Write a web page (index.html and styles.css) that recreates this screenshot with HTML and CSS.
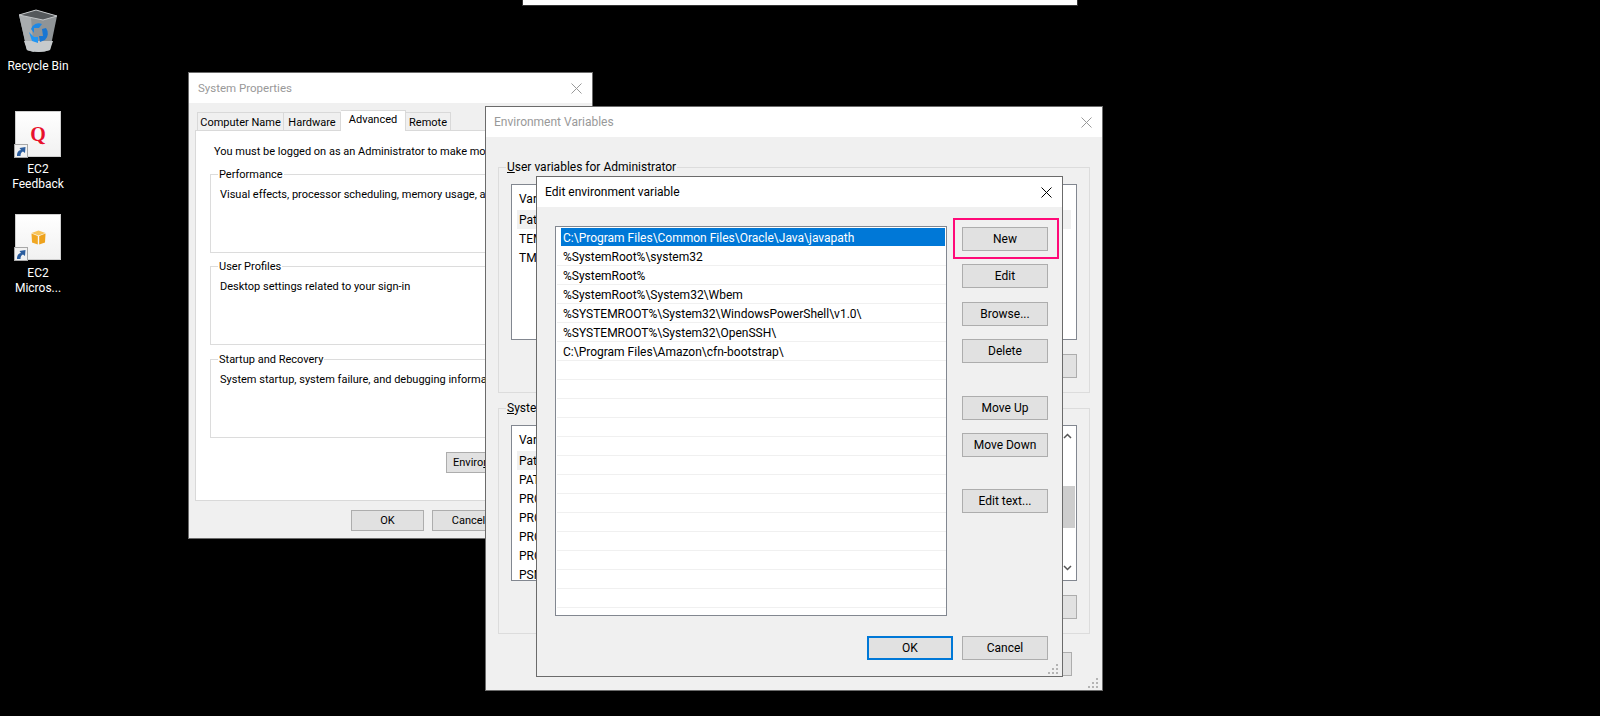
FILE: index.html
```html
<!DOCTYPE html>
<html lang="en">
<head>
    <meta charset="UTF-8">
    <title>Edit environment variable</title>
    <link rel="stylesheet" href="styles.css">
</head>
<body>

    <div class="top-strip"></div>

    <!-- desktop icons -->
    <div class="desk-icon recycle">
        <svg class="bin" width="42" height="44" viewBox="0 0 42 44">
            <path d="M2 6 L19 1 L40 7 L33 41 Q22 45 10 41 Z" fill="#8f9497"/>
            <path d="M2 6 L10 41 Q14 42.5 17 43 L14 9 Z" fill="#a9adaf"/>
            <path d="M2 6 L19 1 L40 7 L26 11 Z" fill="#55595c"/>
            <path d="M2 6 L19 1 L40 7 L26 11 Z" fill="none" stroke="#c4c7c9" stroke-width="1"/>
            <path d="M7 32 L36 32 L33 41 Q22 45 10 41 Z" fill="#c6cacc"/>
            <path d="M14 20 A8 8 0 0 1 25 15 L22 19 L17 19 L17 24 Z" fill="#1e88e5"/>
            <path d="M29 19 A9 9 0 0 1 28 31 L23 33 L22 27 L26 27 L25 20 Z" fill="#1976d2"/>
            <path d="M12 23 L17 28 L21 28 L21 34 L15 32 Z" fill="#2196f3"/>
        </svg>
        <span class="desk-label">Recycle Bin</span>
    </div>

    <div class="desk-icon feedback">
        <div class="tile">
            <span class="q-logo">Q</span>
            <svg class="shortcut" width="14" height="14" viewBox="0 0 14 14">
                <rect x="0.5" y="0.5" width="13" height="13" fill="#f2f2f2" stroke="#a8a8a8"/>
                <path d="M3 12 C3 8 4.500 6.500 7 6 L5.500 4 L11.500 3 L11 9 L9 7.500 C7.500 8 6.500 9.500 6.500 12 Z" fill="#2b5d9e"/>
            </svg>
        </div>
        <span class="desk-label">EC2<br>Feedback</span>
    </div>

    <div class="desk-icon micros">
        <div class="tile">
            <svg class="cube" width="15" height="15" viewBox="0 0 15 15">
                <path d="M0.500 3 L7.500 0.500 L14.500 3 L7.500 5.500 Z" fill="#f8c45a"/>
                <path d="M0.500 3.500 L6.800 6 L6.800 14.500 L1 12.500 Z" fill="#f0a723"/>
                <path d="M14.500 3.500 L8.200 6 L8.200 14.500 L14 12.500 Z" fill="#eea21c"/>
            </svg>
            <svg class="shortcut" width="14" height="14" viewBox="0 0 14 14">
                <rect x="0.5" y="0.5" width="13" height="13" fill="#f2f2f2" stroke="#a8a8a8"/>
                <path d="M3 12 C3 8 4.500 6.500 7 6 L5.500 4 L11.500 3 L11 9 L9 7.500 C7.500 8 6.500 9.500 6.500 12 Z" fill="#2b5d9e"/>
            </svg>
        </div>
        <span class="desk-label">EC2<br>Micros...</span>
    </div>

    <!-- System Properties -->
    <div class="window sysprops">
        <div class="titlebar inactive">
            <span>System Properties</span>
            <svg class="close" width="11" height="11" viewBox="0 0 11 11"><path d="M0.500 0.500 L10.500 10.500 M10.500 0.500 L0.500 10.500" stroke="#999" fill="none"/></svg>
        </div>
        <div class="sys-body">
            <div class="tabs">
                <span class="tab tab-name">Computer Name</span>
                <span class="tab tab-hw">Hardware</span>
                <span class="tab tab-adv">Advanced</span>
                <span class="tab tab-rem">Remote</span>
            </div>
            <div class="page">
                <p class="notice">You must be logged on as an Administrator to make most of these changes.</p>
                <fieldset class="group first">
                    <legend>Performance</legend>
                    <p>Visual effects, processor scheduling, memory usage, and virtual memory</p>
                </fieldset>
                <fieldset class="group second">
                    <legend>User Profiles</legend>
                    <p>Desktop settings related to your sign-in</p>
                </fieldset>
                <fieldset class="group third">
                    <legend>Startup and Recovery</legend>
                    <p>System startup, system failure, and debugging information</p>
                </fieldset>
                <div class="env-row"><button class="btn env-btn">Enviro<u>n</u>ment Variables...</button></div>
            </div>
            <div class="sys-footer">
                <button class="btn small">OK</button>
                <button class="btn small">Cancel</button>
                <button class="btn small">Apply</button>
            </div>
        </div>
    </div>

    <!-- Environment Variables -->
    <div class="window envvars">
        <div class="titlebar inactive">
            <span>Environment Variables</span>
            <svg class="close" width="11" height="11" viewBox="0 0 11 11"><path d="M0.500 0.500 L10.500 10.500 M10.500 0.500 L0.500 10.500" stroke="#999" fill="none"/></svg>
        </div>
        <div class="env-body">
            <fieldset class="env-group">
                <legend><u>U</u>ser variables for Administrator</legend>
                <div class="var-list user-list">
                    <div class="var-rows">
                        <div class="var-head">Variable</div>
                        <div class="var-row picked">Path</div>
                        <div class="var-row">TEMP</div>
                        <div class="var-row">TMP</div>
                    </div>
                </div>
                <div class="var-actions"><button class="btn wide">Delete</button></div>
            </fieldset>
            <fieldset class="env-group sys-group">
                <legend><u>S</u>ystem variables</legend>
                <div class="var-list system-list">
                    <div class="var-rows">
                        <div class="var-head">Variable</div>
                        <div class="var-row picked">Path</div>
                        <div class="var-row">PATHEXT</div>
                        <div class="var-row">PROCESSOR_ARCHITECTURE</div>
                        <div class="var-row">PROCESSOR_IDENTIFIER</div>
                        <div class="var-row">PROCESSOR_LEVEL</div>
                        <div class="var-row">PROCESSOR_REVISION</div>
                        <div class="var-row">PSModulePath</div>
                    </div>
                    <div class="scrollbar">
                        <svg width="9" height="6" viewBox="0 0 9 6"><path d="M1 5 L4.500 1.500 L8 5" fill="none" stroke="#555" stroke-width="1.500"/></svg>
                        <div class="thumb"></div>
                        <svg width="9" height="6" viewBox="0 0 9 6"><path d="M1 1 L4.500 4.500 L8 1" fill="none" stroke="#555" stroke-width="1.500"/></svg>
                    </div>
                </div>
                <div class="var-actions"><button class="btn wide">Delete</button></div>
            </fieldset>
            <div class="env-footer"><button class="btn wide">Cancel</button></div>
        </div>
        <svg class="grip" width="12" height="12" viewBox="0 0 12 12"><path d="M8 0h2v2H8zM4 4h2v2H4zM8 4h2v2H8zM0 8h2v2H0zM4 8h2v2H4zM8 8h2v2H8z" fill="#b4b4b4"/></svg>
    </div>

    <!-- Edit environment variable -->
    <div class="window editvar">
        <div class="titlebar">
            <span>Edit environment variable</span>
            <svg class="close" width="11" height="11" viewBox="0 0 11 11"><path d="M0.500 0.500 L10.500 10.500 M10.500 0.500 L0.500 10.500" stroke="#000" fill="none"/></svg>
        </div>
        <div class="edit-body">
            <div class="edit-main">
                <div class="path-list">
                    <div class="path-row selected">C:\Program Files\Common Files\Oracle\Java\javapath</div>
                    <div class="path-row">%SystemRoot%\system32</div>
                    <div class="path-row">%SystemRoot%</div>
                    <div class="path-row">%SystemRoot%\System32\Wbem</div>
                    <div class="path-row">%SYSTEMROOT%\System32\WindowsPowerShell\v1.0\</div>
                    <div class="path-row">%SYSTEMROOT%\System32\OpenSSH\</div>
                    <div class="path-row">C:\Program Files\Amazon\cfn-bootstrap\</div>
                    <div class="path-row"></div>
                    <div class="path-row"></div>
                    <div class="path-row"></div>
                    <div class="path-row"></div>
                    <div class="path-row"></div>
                    <div class="path-row"></div>
                    <div class="path-row"></div>
                    <div class="path-row"></div>
                    <div class="path-row"></div>
                    <div class="path-row"></div>
                    <div class="path-row"></div>
                    <div class="path-row"></div>
                    <div class="path-row"></div>
                </div>
                <div class="side-buttons">
                    <button class="btn wide highlighted">New</button>
                    <button class="btn wide">Edit</button>
                    <button class="btn wide browse">Browse...</button>
                    <button class="btn wide">Delete</button>
                    <button class="btn wide move-up">Move Up</button>
                    <button class="btn wide">Move Down</button>
                    <button class="btn wide edit-text">Edit text...</button>
                </div>
            </div>
            <div class="edit-footer">
                <button class="btn wide default">OK</button>
                <button class="btn wide">Cancel</button>
            </div>
        </div>
        <svg class="grip" width="12" height="12" viewBox="0 0 12 12"><path d="M8 0h2v2H8zM4 4h2v2H4zM8 4h2v2H8zM0 8h2v2H0zM4 8h2v2H4zM8 8h2v2H8z" fill="#b4b4b4"/></svg>
    </div>

    <!-- red box drawn on the screenshot -->
    <div class="callout"></div>

</body>
</html>
```

FILE: styles.css
```css
* {
    box-sizing: border-box;
}
body {
    margin: 0;
    width: 1600px;
    height: 716px;
    overflow: hidden;
    background: #000;
    font-family: Roboto, "Open Sans", sans-serif;
    font-size: 12px;
    line-height: 16px;
    color: #000;
    position: relative;
}
p {
    margin: 0;
    white-space: nowrap;
}

.top-strip {
    position: absolute;
    left: 522px;
    top: -1px;
    width: 556px;
    height: 7px;
    background: #fff;
    border: 1px solid #333;
}

/* desktop */
.desk-icon {
    position: absolute;
    left: 0;
    width: 76px;
    display: flex;
    flex-direction: column;
    align-items: center;
}
.recycle {
    top: 9px;
}
.feedback {
    top: 111px;
}
.micros {
    top: 214px;
}
.bin {
    margin-bottom: 6px;
}
.desk-label {
    color: #fff;
    text-align: center;
    line-height: 15px;
    text-shadow: 0 1px 2px #000;
}
.tile {
    position: relative;
    width: 46px;
    height: 46px;
    margin-bottom: 5px;
    background: linear-gradient(#fff, #f1f1f1);
    border: 1px solid #cfcfcf;
    display: flex;
    align-items: center;
    justify-content: center;
}
.micros .tile {
    margin-bottom: 6px;
}
.q-logo {
    font-family: "Liberation Serif", serif;
    font-size: 20px;
    font-weight: bold;
    color: #e8112d;
    line-height: 20px;
}
.shortcut {
    position: absolute;
    left: -2px;
    bottom: -2px;
}

/* windows */
.window {
    position: absolute;
    border: 1px solid #6b6b6b;
    background: #f0f0f0;
    display: flex;
    flex-direction: column;
}
.sysprops {
    left: 188px;
    top: 72px;
    width: 405px;
    height: 467px;
    font-size: 11px;
}
.envvars {
    left: 485px;
    top: 106px;
    width: 618px;
    height: 585px;
}
.editvar {
    left: 536px;
    top: 176px;
    width: 527px;
    height: 501px;
}
.titlebar {
    flex: none;
    height: 30px;
    background: #fff;
    padding: 0 9px 0 8px;
    display: flex;
    align-items: center;
    justify-content: space-between;
}
.titlebar .close {
    margin-right: 1px;
}
.titlebar.inactive {
    color: #999;
}
.sysprops .titlebar {
    padding-left: 9px;
    font-size: 11.5px;
}
.grip {
    position: absolute;
    right: 2px;
    bottom: 0;
}

.btn {
    display: block;
    margin: 0;
    padding: 0;
    font: inherit;
    color: #000;
    background: #e1e1e1;
    border: 1px solid #adadad;
    white-space: nowrap;
    text-align: center;
}
.btn.small {
    width: 73px;
    height: 21px;
}
.btn.wide {
    width: 86px;
    height: 24px;
}
.btn.default {
    border: 2px solid #0078d7;
}

/* system properties */
.sys-body {
    flex: 1;
    padding: 7px 5px 0 6px;
}
.tabs {
    display: flex;
    height: 20px;
    padding-left: 2px;
    align-items: flex-end;
    position: relative;
    z-index: 1;
}
.tab {
    height: 18px;
    margin-bottom: 0;
    background: #f0f0f0;
    border: 1px solid #d9d9d9;
    border-bottom: none;
    text-align: center;
    line-height: 19px;
    white-space: nowrap;
}
.tab-name {
    width: 87px;
}
.tab-hw {
    width: 57px;
    border-left: none;
}
.tab-adv {
    width: 65px;
    height: 21px;
    margin-bottom: -1px;
    background: #fff;
    border-left: none;
    line-height: 18px;
}
.tab-rem {
    width: 45px;
    border-left: none;
}
.page {
    height: 371px;
    background: #fff;
    border: 1px solid #d9d9d9;
    padding: 13px 14px 0;
}
.notice {
    padding-left: 4px;
}
.group {
    margin: 6px 0 0;
    padding: 5px 9px 0;
    height: 87px;
    border: 1px solid #dcdcdc;
}
.group.second {
    margin-top: 5px;
}
.group legend {
    height: 16px;
    padding: 1px 1px 0;
    margin-left: -2px;
    line-height: 16px;
}
.env-group legend {
    padding: 0 1px;
    margin-left: -5px;
    line-height: 16px;
}
.env-row {
    display: flex;
    justify-content: flex-end;
    margin-top: 14px;
}
.env-btn {
    width: 126px;
    height: 21px;
    padding-left: 6px;
    text-align: left;
}
.sys-footer {
    display: flex;
    justify-content: flex-end;
    gap: 8px;
    margin-top: 9px;
    padding-right: 1px;
}

/* environment variables */
.env-body {
    flex: 1;
    padding: 22px 12px 0;
}
.env-group {
    margin: 0;
    padding: 9px 12px 0;
    height: 234px;
    border: 1px solid #dcdcdc;
}
.env-group.sys-group {
    margin-top: 7px;
}
.var-list {
    display: flex;
    height: 156px;
    background: #fff;
    border: 1px solid #828790;
    overflow: hidden;
}
.var-rows {
    flex: 1;
    padding: 3px 5px 0;
    white-space: nowrap;
}
.var-head {
    height: 22px;
    padding-left: 2px;
    line-height: 22px;
}
.var-row {
    height: 19px;
    padding-left: 2px;
    line-height: 21px;
}
.var-row.picked {
    background: #f0f0f0;
}
.var-actions {
    display: flex;
    justify-content: flex-end;
    margin-top: 14px;
}
.scrollbar {
    flex: none;
    width: 16px;
    padding: 7px 1px 0 0;
    display: flex;
    flex-direction: column;
    align-items: center;
}
.scrollbar .thumb {
    width: 15px;
    height: 42px;
    margin: 47px 0 37px;
    background: #cdcdcd;
}
.env-footer {
    display: flex;
    justify-content: flex-end;
    margin-top: 18px;
    padding-right: 18px;
}

/* edit environment variable */
.edit-body {
    flex: 1;
    padding: 19px 14px 0 18px;
}
.edit-main {
    display: flex;
    gap: 15px;
}
.path-list {
    width: 392px;
    height: 390px;
    padding: 1px 0 0 1px;
    background: #fff;
    border: 1px solid #828790;
    overflow: hidden;
}
.path-row {
    height: 19px;
    padding-left: 6px;
    line-height: 20px;
    border-bottom: 1px solid #f0f0f0;
    white-space: nowrap;
}
.path-row.selected {
    height: 18px;
    margin: 0 1px 1px 4px;
    padding-left: 2px;
    background: #0078d7;
    color: #fff;
    border-bottom: none;
}
.side-buttons {
    display: flex;
    flex-direction: column;
    align-items: flex-start;
    gap: 13px;
    padding-top: 1px;
}
.side-buttons .browse {
    margin-top: 1px;
}
.side-buttons .move-up {
    margin-top: 20px;
}
.side-buttons .edit-text {
    margin-top: 19px;
}
.edit-footer {
    display: flex;
    justify-content: flex-end;
    gap: 9px;
    margin-top: 20px;
}

.callout {
    position: absolute;
    left: 953px;
    top: 218px;
    width: 106px;
    height: 41px;
    border: 2px solid #ff0a78;
}
```
